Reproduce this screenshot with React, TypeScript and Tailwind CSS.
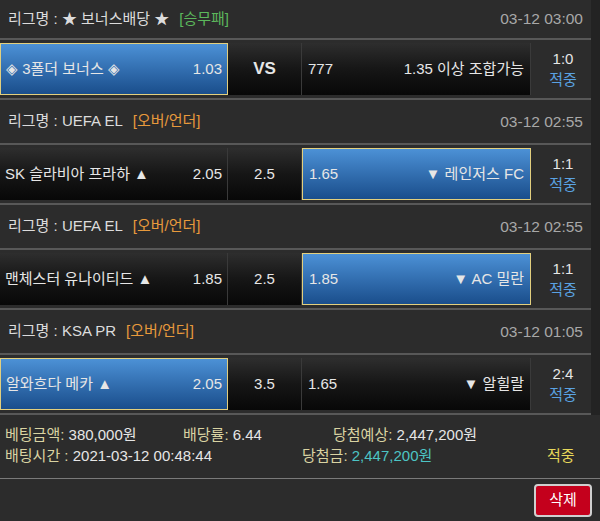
import React from "react";

type Bet = {
  league: string;
  tag: string;
  tagColor: string;
  time: string;
  home: string;
  homeOdd: string;
  mid: string;
  midBold?: boolean;
  awayOdd: string;
  away: string;
  pick: "home" | "away";
  score: string;
};

const bets: Bet[] = [
  {
    league: "★ 보너스배당 ★",
    tag: "[승무패]",
    tagColor: "text-[#5cb85c]",
    time: "03-12 03:00",
    home: "◈ 3폴더 보너스 ◈",
    homeOdd: "1.03",
    mid: "VS",
    midBold: true,
    awayOdd: "777",
    away: "1.35 이상 조합가능",
    pick: "home",
    score: "1:0",
  },
  {
    league: "UEFA EL",
    tag: "[오버/언더]",
    tagColor: "text-[#e89a3c]",
    time: "03-12 02:55",
    home: "SK 슬라비아 프라하 ▲",
    homeOdd: "2.05",
    mid: "2.5",
    awayOdd: "1.65",
    away: "▼ 레인저스 FC",
    pick: "away",
    score: "1:1",
  },
  {
    league: "UEFA EL",
    tag: "[오버/언더]",
    tagColor: "text-[#e89a3c]",
    time: "03-12 02:55",
    home: "맨체스터 유나이티드 ▲",
    homeOdd: "1.85",
    mid: "2.5",
    awayOdd: "1.85",
    away: "▼ AC 밀란",
    pick: "away",
    score: "1:1",
  },
  {
    league: "KSA PR",
    tag: "[오버/언더]",
    tagColor: "text-[#e89a3c]",
    time: "03-12 01:05",
    home: "알와흐다 메카 ▲",
    homeOdd: "2.05",
    mid: "3.5",
    awayOdd: "1.65",
    away: "▼ 알힐랄",
    pick: "home",
    score: "2:4",
  },
];

const font = "font-['Liberation_Sans','Noto_Sans_CJK_KR',sans-serif]";

const dark =
  "bg-gradient-to-b from-[#2e2e2e] via-[#161616] to-[#080808] border-r border-[#3a3a3a]";
const blue =
  "bg-gradient-to-b from-[#4c91d6] to-[#1a4e8c] border-[1.5px] border-[#e2cf7e]";

const App: React.FC = () => {
  return (
    <div className={`w-[600px] h-[521px] bg-[#232323] text-[15px] text-[#e6e6e6] ${font} overflow-hidden`}>
      <div className="w-[591px]">
        {bets.map((b, i) => (
          <div key={i}>
            {/* League header */}
            <div
              className={`flex items-center justify-between px-2 bg-[#2c2c2c] border-b-2 border-[#585858] ${
                i === 0 ? "h-[40px]" : "h-[45px]"
              }`}
            >
              <div className="flex items-center gap-[10px] text-[#dcdcdc]">
                <span>리그명 : {b.league}</span>
                <span className={b.tagColor}>{b.tag}</span>
              </div>
              <span className="text-[#a8a8a8] text-[15.5px]">{b.time}</span>
            </div>

            {/* Match row */}
            <div className="flex h-[60px] pt-[3px] pb-[3px] bg-[#2c2c2c] border-b-2 border-[#585858]">
              <div
                className={`w-[228px] flex items-center justify-between pl-[5px] pr-[5px] ${
                  b.pick === "home" ? blue : dark
                }`}
              >
                <span>{b.home}</span>
                <span>{b.homeOdd}</span>
              </div>
              <div
                className={`w-[74px] flex items-center justify-center ${dark} ${
                  b.midBold ? "font-bold text-[17px]" : ""
                }`}
              >
                {b.mid}
              </div>
              <div
                className={`w-[229px] flex items-center justify-between pl-[6px] pr-[6px] ${
                  b.pick === "away" ? blue : dark
                }`}
              >
                <span>{b.awayOdd}</span>
                <span>{b.away}</span>
              </div>
              <div className="flex-1 flex flex-col items-center justify-center leading-[21px] pl-[4px]">
                <span>{b.score}</span>
                <span className="text-[#5aa2e2]">적중</span>
              </div>
            </div>
          </div>
        ))}
      </div>

      {/* Summary */}
      <div className="bg-[#2c2c2c] border-b border-[#7a7a7a] h-[64px] pt-[9px] pl-[5px] leading-[21px]">
        <div className="flex">
          <div className="w-[178px]">
            <span className="text-[#d9d3a2]">베팅금액:</span> 380,000원
          </div>
          <div className="w-[150px]">
            <span className="text-[#d9d3a2]">배당률:</span> 6.44
          </div>
          <div>
            <span className="text-[#d9d3a2]">당첨예상:</span> 2,447,200원
          </div>
        </div>
        <div className="flex">
          <div className="w-[297px]">
            <span className="text-[#d9d3a2]">배팅시간 :</span> 2021-03-12 00:48:44
          </div>
          <div className="w-[245px]">
            <span className="text-[#d9d3a2]">당첨금:</span>{" "}
            <span className="text-[#4cc4c4]">2,447,200원</span>
          </div>
          <div className="text-[#e6d85a]">적중</div>
        </div>
      </div>

      <div className="bg-[#2c2c2c] h-[43px] flex items-center justify-end pr-[8px]">
        <button className="w-[58px] h-[33px] rounded-[4px] bg-[#c4001c] border-2 border-[#cfcfcf] text-white text-[15px]">
          삭제
        </button>
      </div>
    </div>
  );
};

export default App;
